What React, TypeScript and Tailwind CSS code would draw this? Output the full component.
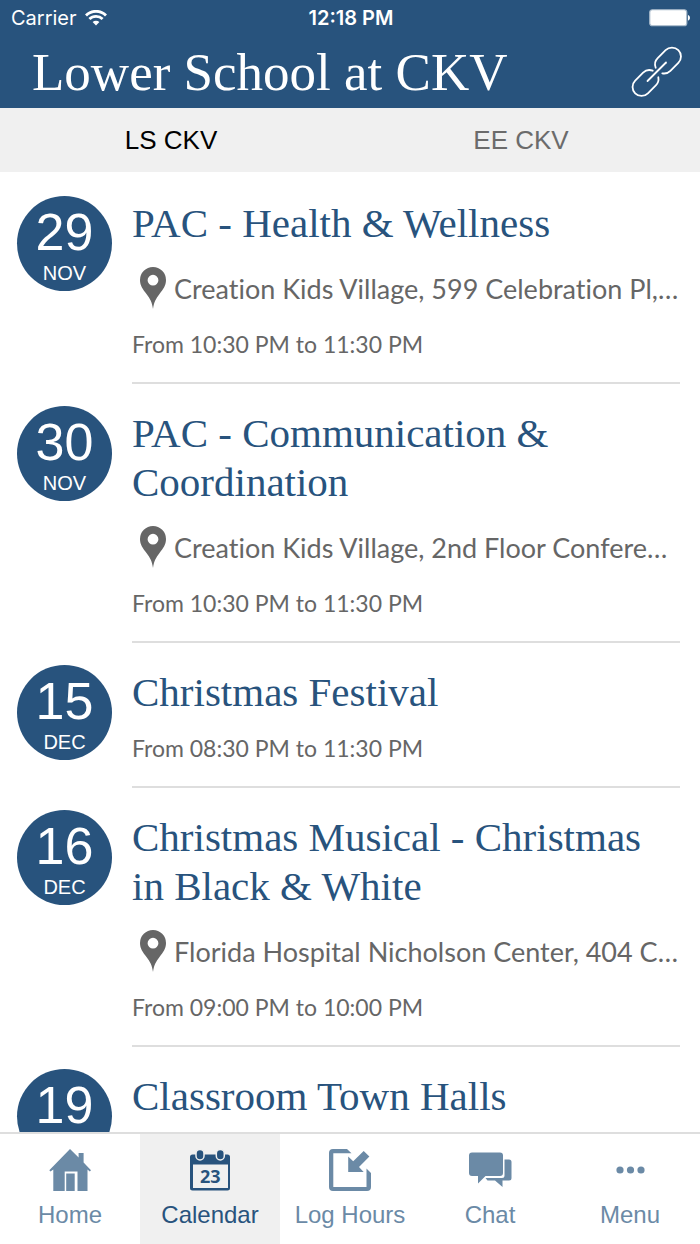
import { useState } from "react";
import type { ReactNode } from "react";

interface CalendarEvent {
  day: number;
  month: string;
  title: string;
  location?: string;
  time?: string;
}

const events: CalendarEvent[] = [
  {
    day: 29,
    month: "NOV",
    title: "PAC - Health & Wellness",
    location: "Creation Kids Village, 599 Celebration Pl,…",
    time: "From 10:30 PM to 11:30 PM",
  },
  {
    day: 30,
    month: "NOV",
    title: "PAC - Communication & Coordination",
    location: "Creation Kids Village, 2nd Floor Confere…",
    time: "From 10:30 PM to 11:30 PM",
  },
  {
    day: 15,
    month: "DEC",
    title: "Christmas Festival",
    time: "From 08:30 PM to 11:30 PM",
  },
  {
    day: 16,
    month: "DEC",
    title: "Christmas Musical - Christmas in Black & White",
    location: "Florida Hospital Nicholson Center, 404 C…",
    time: "From 09:00 PM to 10:00 PM",
  },
  {
    day: 19,
    month: "DEC",
    title: "Classroom Town Halls",
  },
];

function WifiIcon() {
  return (
    <svg width="22" height="16" viewBox="0 0 22 16" fill="none" stroke="currentColor" strokeWidth="2.8">
      <path d="M1 5.4a14.2 14.2 0 0 1 20 0" />
      <path d="M4.4 9a9.4 9.4 0 0 1 13.2 0" />
      <path d="M11 15.6 7.6 12.1a4.9 4.9 0 0 1 6.8 0z" fill="currentColor" stroke="none" />
    </svg>
  );
}

function BatteryIcon() {
  return (
    <svg width="42" height="18" viewBox="0 0 42 18">
      <rect x="0.75" y="0.75" width="37" height="16" rx="2.5" fill="#fff" stroke="#a9bbcb" strokeWidth="1.2" />
      <path d="M39 6c2.6.6 2.6 5 0 5.600z" fill="#fff" />
    </svg>
  );
}

function LinkIcon() {
  return (
    <svg width="52" height="52" viewBox="0 0 52 52" fill="none" stroke="currentColor" strokeWidth="1.8" strokeLinecap="round">
      <path
        transform="translate(37 14.500) rotate(-45)"
        d="M-13.800-3.600A9 9 0 0 1-5.600-9H5.600A9 9 0 0 1 5.600 9H-5.600A9 9 0 0 1-13.100 5"
      />
      <path
        transform="translate(14.500 37) rotate(135)"
        d="M-13.100-5A9 9 0 0 1-5.600-9H5.600A9 9 0 0 1 5.600 9H-5.600A9 9 0 0 1-13.800 3.600"
      />
      <path d="M16.500 35 35 16.500" />
    </svg>
  );
}

function PinIcon() {
  return (
    <svg className="shrink-0" width="26" height="43" viewBox="0 0 26 43" fill="currentColor">
      <path
        fillRule="evenodd"
        d="M13 0a13 13 0 0 1 13 13c0 5.500-3 9.500-6.500 14C16 31.500 14 35 13 42c-1-7-3-10.500-6.500-15C3 22.500 0 18.500 0 13A13 13 0 0 1 13 0zm0 7.800a5.400 5.400 0 1 0 0 10.800 5.400 5.400 0 0 0 0-10.800z"
      />
    </svg>
  );
}

function HomeIcon() {
  return (
    <svg width="42" height="42" viewBox="0 0 42 42" fill="currentColor">
      <path d="M21 0 29.600 8.600V4h5v9.600l7.400 7.700-1.200 1.200-2.300-2V42h-10V22.500H15.700V42H4.300V20.500l-2.800 2L.3 21.300z" />
      <path d="M17.200 24.500h8.500V42h-8.500z" />
    </svg>
  );
}

function CalendarIcon() {
  return (
    <svg width="42" height="42" viewBox="0 0 42 42" fill="currentColor">
      <path
        fillRule="evenodd"
        d="M3.500 5.500h35a2.500 2.500 0 0 1 2.500 2.500v31a2.500 2.500 0 0 1-2.500 2.500h-35A2.500 2.500 0 0 1 1 39V8a2.500 2.500 0 0 1 2.500-2.500zM4 15.500V39h35V15.500z"
      />
      <g stroke="#f0f0f0" strokeWidth="1.500">
        <rect x="7" y="0.500" width="8" height="10.500" rx="4" />
        <rect x="27.300" y="0.500" width="8" height="10.500" rx="4" />
      </g>
      <text x="21.300" y="33.500" textAnchor="middle" fontSize="18" className="font-['Open_Sans',sans-serif] font-bold">
        23
      </text>
    </svg>
  );
}

function LogIcon() {
  return (
    <svg width="44" height="42" viewBox="0 0 44 42" fill="currentColor">
      <path d="M5 0h14l4.500 4.300H5.300V38H38.500V24.500V19.500l4.500 4.500V38a4 4 0 0 1-4 4H5a4 4 0 0 1-4-4V4a4 4 0 0 1 4-4z" />
      <path d="M20.200 23V7.500l5 4.800L35.700 2l5.700 5.500L31 18l4.700 5z" />
    </svg>
  );
}

function ChatIcon() {
  return (
    <svg width="44" height="42" viewBox="0 0 44 42" fill="currentColor">
      <path d="M4 3.500h28a3 3 0 0 1 3 3V24a3 3 0 0 1-3 3H17.500L10 34.500V27H4a3 3 0 0 1-3-3V6.500a3 3 0 0 1 3-3z" />
      <path d="M36.500 10.500H41a2.500 2.500 0 0 1 2.500 2.500v16a2.500 2.500 0 0 1-2.500 2.500h-6.500V38L27 31.500h-7.500L17.500 29H34a2.500 2.500 0 0 0 2.500-2.500z" />
    </svg>
  );
}

function MenuIcon() {
  return (
    <svg width="42" height="42" viewBox="0 0 42 42" fill="currentColor">
      <circle cx="11" cy="21" r="3.600" />
      <circle cx="21.500" cy="21" r="3.600" />
      <circle cx="32" cy="21" r="3.600" />
    </svg>
  );
}

const navItems: { label: string; icon: ReactNode }[] = [
  { label: "Home", icon: <HomeIcon /> },
  { label: "Calendar", icon: <CalendarIcon /> },
  { label: "Log Hours", icon: <LogIcon /> },
  { label: "Chat", icon: <ChatIcon /> },
  { label: "Menu", icon: <MenuIcon /> },
];

function EventRow({ event }: { event: CalendarEvent }) {
  return (
    <li className="flex items-start gap-5 pl-[17px] pr-5">
      <div className="mt-[22px] flex size-[95px] shrink-0 flex-col items-center rounded-full bg-[#28537d] pt-[10px] text-white">
        <span className="text-[52px] leading-[52px]">{event.day}</span>
        <span className="text-[20px] leading-[30px]">{event.month}</span>
      </div>
      <div className="flex min-w-0 flex-1 flex-col gap-4 border-b-2 border-[#dedede] pb-[23px] pt-[25px]">
        <h2 className="font-['Liberation_Serif',serif] text-[41px] leading-[49px] text-[#28537d]">{event.title}</h2>
        {event.location && (
          <div className="flex h-[49px] items-center gap-2 pl-2 text-[#666]">
            <PinIcon />
            <span className="whitespace-nowrap font-['Lato',sans-serif] text-[27px] leading-[36px] [font-variant-ligatures:none]">
              {event.location}
            </span>
          </div>
        )}
        {event.time && (
          <p className="font-['Lato',sans-serif] text-[23px] leading-[30px] text-[#666]">{event.time}</p>
        )}
      </div>
    </li>
  );
}

export default function App() {
  const [tab, setTab] = useState("LS CKV");
  const [page, setPage] = useState("Calendar");

  return (
    <div className="flex h-screen flex-col bg-white font-['Liberation_Sans',sans-serif]">
      <header className="h-[108px] shrink-0 bg-[#28537d] text-white">
        <div className="grid h-9 grid-cols-3 items-center pl-[11px] pr-[9px] font-['Inter',sans-serif] text-[20px] leading-6">
          <div className="flex items-center gap-2">
            <span>Carrier</span>
            <WifiIcon />
          </div>
          <span className="text-center font-semibold">12:18 PM</span>
          <div className="flex justify-end">
            <BatteryIcon />
          </div>
        </div>
        <div className="flex h-[72px] items-center justify-between pl-8 pr-[17px]">
          <h1 className="whitespace-nowrap font-['Liberation_Serif',serif] text-[53px] leading-[72px]">Lower School at CKV</h1>
          <button type="button" aria-label="Open link">
            <LinkIcon />
          </button>
        </div>
      </header>

      <div className="grid h-16 shrink-0 grid-cols-2 bg-[#f0f0f0]">
        {["LS CKV", "EE CKV"].map((name) => (
          <button
            key={name}
            type="button"
            onClick={() => setTab(name)}
            className={`pr-2 text-[26px] leading-8 ${tab === name ? "text-black" : "text-[#6b6b6b]"}`}
          >
            {name}
          </button>
        ))}
      </div>

      <main className="min-h-0 flex-1 overflow-hidden pt-[2px]">
        <ul>
          {events.map((event) => (
            <EventRow key={event.day} event={event} />
          ))}
        </ul>
      </main>

      <nav className="grid h-28 shrink-0 grid-cols-5 border-t-2 border-[#dedede] bg-white">
        {navItems.map((item) => (
          <button
            key={item.label}
            type="button"
            onClick={() => setPage(item.label)}
            className={`flex flex-col items-center gap-2 pt-[15px] ${page === item.label ? "bg-[#f0f0f0] text-[#28537d]" : "text-[#6b8aa6]"}`}
          >
            {item.icon}
            <span className="whitespace-nowrap text-[24px] leading-8">{item.label}</span>
          </button>
        ))}
      </nav>
    </div>
  );
}
